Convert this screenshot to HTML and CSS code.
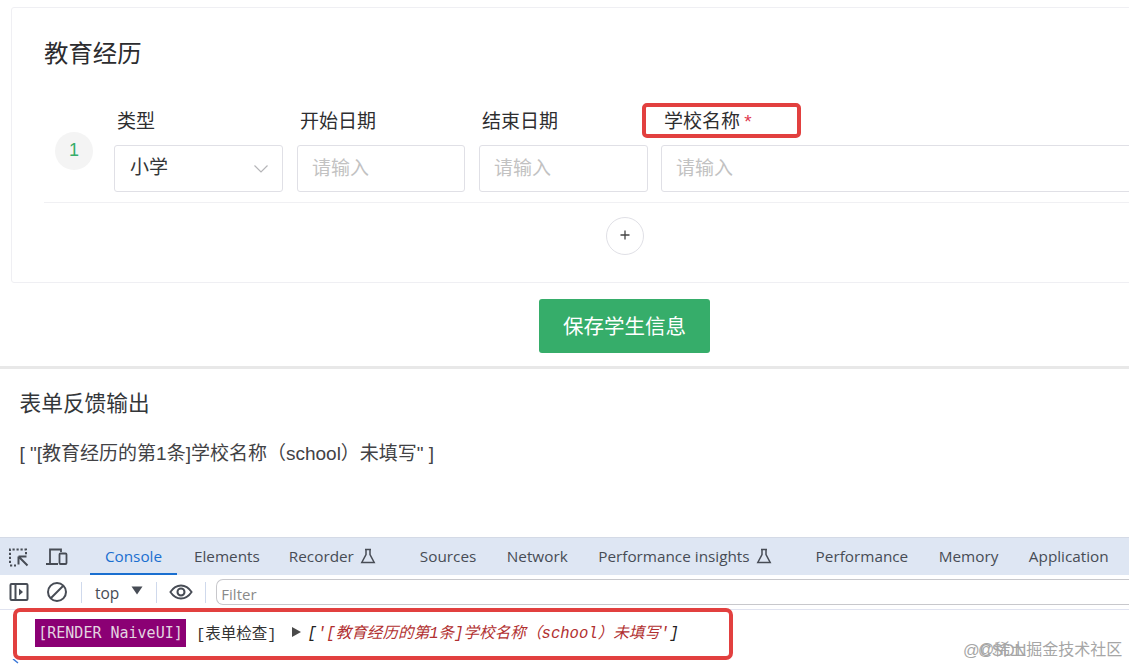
FILE: index.html
```html
<!DOCTYPE html>
<html lang="zh-CN">
<head>
<meta charset="utf-8">
<title>教育经历</title>
<link rel="stylesheet" href="styles.css">
</head>
<body>
<main class="app">
  <section class="card">
    <h2 class="card-title">教育经历</h2>
    <div class="edu-row">
      <div class="index-badge">1</div>
      <div class="fields">
        <div class="field field-type">
          <label class="field-label">类型</label>
          <div class="control control-select">
            <span class="value">小学</span>
            <svg class="chevron" width="16" height="16" viewBox="0 0 16 16"><path d="M1.500 4.500 8 11l6.500-6.500" fill="none" stroke="#b5b5b8" stroke-width="1.200"/></svg>
          </div>
        </div>
        <div class="field field-date">
          <label class="field-label">开始日期</label>
          <div class="control"><span class="placeholder">请输入</span></div>
        </div>
        <div class="field field-date">
          <label class="field-label">结束日期</label>
          <div class="control"><span class="placeholder">请输入</span></div>
        </div>
        <div class="field field-school">
          <label class="field-label label-school">学校名称 <span class="required">*</span></label>
          <div class="control control-school"><span class="placeholder">请输入</span></div>
        </div>
      </div>
    </div>
    <div class="add-line">
      <button class="add-btn" type="button"><svg width="12" height="12" viewBox="0 0 12 12"><path d="M6 1.500v9M1.500 6h9" stroke="#444" stroke-width="1.300"/></svg></button>
    </div>
  </section>

  <div class="actions"><button class="save-btn" type="button">保存学生信息</button></div>

  <section class="feedback">
    <h3 class="feedback-title">表单反馈输出</h3>
    <p class="feedback-text">[ "[教育经历的第1条]学校名称（school）未填写" ]</p>
  </section>

  <section class="devtools">
    <nav class="dt-tabs">
      <svg class="dt-ico" width="22" height="22" viewBox="0 0 22 22"><path d="M2 17V3.500h16v6" fill="none" stroke="#474c55" stroke-width="2" stroke-dasharray="2.200 1.800"/><path d="M2 19.500h6" stroke="#474c55" stroke-width="2" stroke-dasharray="2.200 1.800"/><path d="M10.500 10.500h8M10.500 10.500v8M11 11l8.500 8.500" fill="none" stroke="#474c55" stroke-width="2"/></svg>
      <svg class="dt-ico dt-ico-device" width="24" height="22" viewBox="0 0 24 22"><path d="M5 17V3.500h11V6M1 18h12" fill="none" stroke="#474c55" stroke-width="1.800"/><rect x="14.500" y="7.500" width="7" height="10.500" rx="1" fill="none" stroke="#474c55" stroke-width="1.800"/></svg>
      <a class="tab tab-active">Console</a>
      <a class="tab">Elements</a>
      <a class="tab">Recorder<svg class="flask" width="16" height="16" viewBox="0 0 16 16"><path d="M5 1.500h6M6 1.500v5L1.800 14.500h12.400L10 6.500v-5" fill="none" stroke="#474c55" stroke-width="1.500"/></svg></a>
      <a class="tab">Sources</a>
      <a class="tab">Network</a>
      <a class="tab">Performance insights<svg class="flask" width="16" height="16" viewBox="0 0 16 16"><path d="M5 1.500h6M6 1.500v5L1.800 14.500h12.400L10 6.500v-5" fill="none" stroke="#474c55" stroke-width="1.500"/></svg></a>
      <a class="tab">Performance</a>
      <a class="tab">Memory</a>
      <a class="tab">Application</a>
    </nav>
    <div class="dt-toolbar">
      <svg class="tool-sidebar" width="20" height="20" viewBox="0 0 20 20"><rect x="1.500" y="2" width="17" height="16" rx="1" fill="none" stroke="#474c55" stroke-width="2"/><path d="M6.500 2v16" stroke="#474c55" stroke-width="2"/><path d="M10 6.500l4 3.500-4 3.500z" fill="#474c55"/></svg>
      <svg class="tool-clear" width="22" height="22" viewBox="0 0 22 22"><circle cx="11" cy="11" r="9" fill="none" stroke="#474c55" stroke-width="2"/><path d="M4.500 17.500l13-13" stroke="#474c55" stroke-width="2"/></svg>
      <span class="sep"></span>
      <span class="top-select">top</span>
      <svg class="caret" width="12" height="9" viewBox="0 0 12 9"><path d="M0.500 0.500h11L6 8.500z" fill="#474c55"/></svg>
      <span class="sep"></span>
      <svg class="eye" width="24" height="18" viewBox="0 0 26 18"><path d="M1.500 9C5 3.800 9 2 13 2s8 1.800 11.500 7C21 14.200 17 16 13 16S5 14.200 1.500 9z" fill="none" stroke="#474c55" stroke-width="2"/><circle cx="13" cy="9" r="3.800" fill="none" stroke="#474c55" stroke-width="2.200"/></svg>
      <span class="sep"></span>
      <div class="filter">Filter</div>
    </div>
    <div class="dt-console">
      <span class="log-badge">[RENDER NaiveUI]</span>
      <span class="log-group">[表单检查]</span>
      <svg class="log-arrow" width="9" height="10" viewBox="0 0 9 10"><path d="M0 0l9 5-9 5z" fill="#4a4a4a"/></svg>
      <span class="log-array"><span class="bracket">[</span>'[教育经历的第1条]学校名称（school）未填写'<span class="bracket">]</span></span>
    </div>
    <svg class="prompt" width="8" height="8" viewBox="0 0 8 8"><path d="M1 0l5 4" fill="none" stroke="#3b78d8" stroke-width="1.500"/></svg>
  </section>

  <div class="mark mark-label"></div>
  <div class="mark mark-console"></div>
  <div class="watermark"><span class="wm-a">@CSDN</span><span class="wm-b">@稀土掘金技术社区</span></div>
</main>
</body>
</html>
```
FILE: styles.css
```css
* { box-sizing: border-box; }
html, body { margin: 0; padding: 0; height: 100%; overflow: hidden; background: #fff; }
body { font-family: "Noto Sans CJK SC", "Liberation Sans", sans-serif; color: #333639; }
.app { position: relative; width: 1129px; height: 667px; overflow: hidden; }

.card {
  margin: 7px 0 0 11px;
  width: 1300px;
  height: 276px;
  border: 1px solid #efeff3;
  border-radius: 3px;
  padding: 0 0 0 32px;
}
.card-title { margin: 0; padding-top: 26px; padding-bottom: 2px; font-size: 24.400px; line-height: 35px; font-weight: 400; color: #2c2c2f; }

.edu-row { display: flex; align-items: flex-start; margin-top: 40px; height: 92px; border-bottom: 1px solid #f0f0f3; width: 1250px; padding-left: 11px; }
.index-badge {
  width: 38px; height: 38px; margin-top: 21px; flex: none;
  border-radius: 50%; background: #f4f4f4; color: #36ad6a;
  font: 18px/36px "Liberation Sans", sans-serif; text-align: center;
}
.fields { display: flex; margin-left: 21px; gap: 14px; }
.field-label { display: block; font-size: 19px; line-height: 18px; height: 34px; padding-left: 3px; color: #2e2e30; white-space: nowrap; }
.field-type { width: 169px; }
.field-date { width: 168px; }
.field-date:nth-child(3) { width: 169px; margin-right: -1px; }
.field-school { width: 600px; }
.required { color: #e0384f; font-family: "Liberation Sans", sans-serif; }
.control {
  height: 47px; border: 1px solid #e0e0e6; border-radius: 3px;
  padding: 0 15px; display: flex; align-items: center; justify-content: space-between;
  font-size: 19px; background: #fff;
}
.control .value { color: #333639; margin-top: -7px; }
.placeholder { color: #c2c2c2; margin-top: -5px; margin-left: -1px; }
.chevron { margin-right: -2px; margin-top: 1px; }

.add-line { display: flex; justify-content: center; width: 1162px; padding-top: 14px; }
.add-btn {
  width: 38px; height: 38px; padding: 0; border: 1px solid #e0e0e6; border-radius: 50%;
  background: #fff; display: flex; align-items: center; justify-content: center;
}
.add-btn svg { margin-top: -3px; }

.actions { display: flex; padding: 16px 0 0 539px; height: 86px; border-bottom: 3px solid #e8e8e8; }
.save-btn {
  width: 171px; height: 54px; border: 0; border-radius: 3px; background: #36ad6a; color: #fff;
  font-family: inherit; font-size: 20.500px; padding: 0 0 2px; line-height: 50px;
}

.feedback { height: 168px; padding: 15px 0 0 19.500px; }
.feedback-title { margin: 0; font-size: 21.700px; line-height: 36px; font-weight: 400; color: #333639; }
.feedback-text { margin: 20px 0 0; font-size: 19px; line-height: 28px; color: #424245; white-space: nowrap; font-family: "Liberation Sans", "Noto Sans CJK SC", sans-serif; }

.devtools { position: relative; height: 130px; font-family: "Open Sans", "Liberation Sans", sans-serif; }
.dt-tabs {
  display: flex; align-items: center; height: 38px; background: #dee6f3;
  border-top: 1px solid #d4dae6; color: #474c55; font-size: 15.300px; white-space: nowrap;
  padding-left: 8px;
}
.dt-ico-device { margin-left: 15px; }
.tab { display: flex; align-items: center; height: 37px; margin-left: 30.500px; padding-bottom: 2px; color: #474c55; }
.tab-active { color: #1a6fd0; border-bottom: 2px solid #1a6fd0; margin-left: 21px; width: 87px; justify-content: center; padding-bottom: 0; }
.tab-active + .tab { margin-left: 17px; }
.tab-active + .tab + .tab { margin-left: 29px; }
.flask { margin-left: 6px; margin-right: 13.500px; }
.dt-toolbar { display: flex; align-items: center; height: 35px; border-bottom: 1px solid #e0e3f0; color: #474c55; padding-left: 9px; }
.tool-clear { margin-left: 17px; }
.sep { width: 1px; height: 21px; background: #cfd9ec; }
.tool-clear + .sep { margin-left: 13px; }
.top-select { font-size: 15.500px; margin-left: 13px; padding-top: 2px; }
.caret { margin-left: 12px; margin-right: 13px; margin-top: -4px; }
.eye { margin-left: 12px; margin-right: 12px; }
.filter {
  margin-left: 10px; flex: 1; height: 26px; border: 1px solid #c8c8cc; border-right: 0;
  border-radius: 7px 0 0 7px; font-size: 15px; color: #8a8a8a; line-height: 28px; padding-left: 4px;
}
.dt-console { display: flex; align-items: center; height: 28px; margin-top: 9px; padding-left: 35px; white-space: nowrap; }
.log-badge { width: 151px; height: 28px; background: #8b0074; color: #e3d5e0; line-height: 28px; text-align: center; font-family: "DejaVu Sans Mono", monospace; font-size: 15px; }
.log-group { margin: -2px 0 0 10px; font-size: 15.500px; color: #333; font-family: "Liberation Mono", "Noto Sans CJK SC", monospace; }
.log-arrow { margin-left: 15px; margin-top: -2px; }
.log-array { margin: -3px 0 0 7px; font-style: italic; color: #b13030; font-size: 15.600px; font-family: "Liberation Mono", "Noto Sans CJK SC", monospace; }
.bracket { color: #222; }
.prompt { position: absolute; left: 12px; top: 122px; }

.mark { position: absolute; border: 4px solid #e2403f; border-radius: 5px; }
.mark-label { left: 642px; top: 103px; width: 159px; height: 35px; }
.mark-console { left: 13px; top: 608px; width: 720px; height: 52px; border-radius: 7px; }

.watermark { position: absolute; left: 963px; top: 639px; width: 166px; height: 22px; font-size: 16px; line-height: 22px; color: #a6a6a6; white-space: nowrap; font-family: "Liberation Sans", "Noto Sans CJK SC", sans-serif; }
.wm-a { position: absolute; left: 0; top: 0; font-size: 16.500px; }
.wm-b { position: absolute; left: 15px; top: 0; }
```
